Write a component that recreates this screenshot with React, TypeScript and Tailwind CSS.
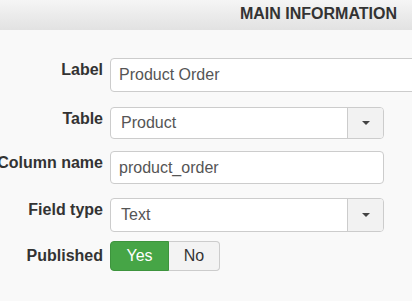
function Caret() {
  return <span className="block w-0 h-0 border-x-[4px] border-x-transparent border-t-[4px] border-t-[#444]" />;
}

function Field({ label, className, children }: { label: string; className: string; children: React.ReactNode }) {
  return (
    <div className={`flex items-start ${className}`}>
      <div className="w-[103px] shrink-0 flex justify-end whitespace-nowrap pt-[2px] text-[16px] leading-[20px] font-bold text-[#333]">
        {label}
      </div>
      <div className="ml-[7px] shrink-0">{children}</div>
    </div>
  );
}

function Select({ value, h }: { value: string; h: string }) {
  return (
    <div className={`flex w-[274px] ${h} bg-white border border-[#ccc] rounded-[4px] overflow-hidden`}>
      <div className="flex-1 flex items-center pl-[10px] text-[16px] text-[#555]">{value}</div>
      <div className="w-[36px] flex items-center justify-center bg-[#f2f2f2] border-l border-[#ccc]">
        <Caret />
      </div>
    </div>
  );
}

export default function App() {
  return (
    <div className="w-[412px] h-[301px] overflow-hidden bg-[#f9f9f9]" style={{ fontFamily: '"Liberation Sans", Arial, sans-serif' }}>
      <div className="h-[30px] bg-gradient-to-b from-[#f5f5f5] to-[#e2e2e2] flex justify-end pr-[15px]">
        <h3 className="text-[16px] leading-[28px] font-bold text-[#333]">MAIN INFORMATION</h3>
      </div>

      <Field label="Label" className="mt-[28px]">
        <div className="w-[320px] h-[34px] bg-white border border-[#ccc] rounded-[4px] flex items-center pl-[8px] text-[16px] text-[#555]">
          Product Order
        </div>
      </Field>

      <Field label="Table" className="mt-[15px]">
        <Select value="Product" h="h-[32px]" />
      </Field>

      <Field label="Column name" className="mt-[12px]">
        <div className="w-[274px] h-[33px] bg-white border border-[#ccc] rounded-[4px] flex items-center pl-[8px] text-[16px] text-[#555]">
          product_order
        </div>
      </Field>

      <Field label="Field type" className="mt-[14px]">
        <Select value="Text" h="h-[34px]" />
      </Field>

      <div className="flex items-start mt-[9px]">
        <div className="w-[103px] shrink-0 flex justify-end pt-[5px] text-[16px] leading-[20px] font-bold text-[#333]">Published</div>
        <div className="ml-[7px] flex h-[30px] text-[16px]">
          <button className="w-[59px] bg-[#46a546] border border-[#3d943d] rounded-l-[4px] text-white">Yes</button>
          <button className="w-[51px] bg-[#f3f3f3] border border-l-0 border-[#ccc] rounded-r-[4px] text-[#333]">No</button>
        </div>
      </div>
    </div>
  );
}
